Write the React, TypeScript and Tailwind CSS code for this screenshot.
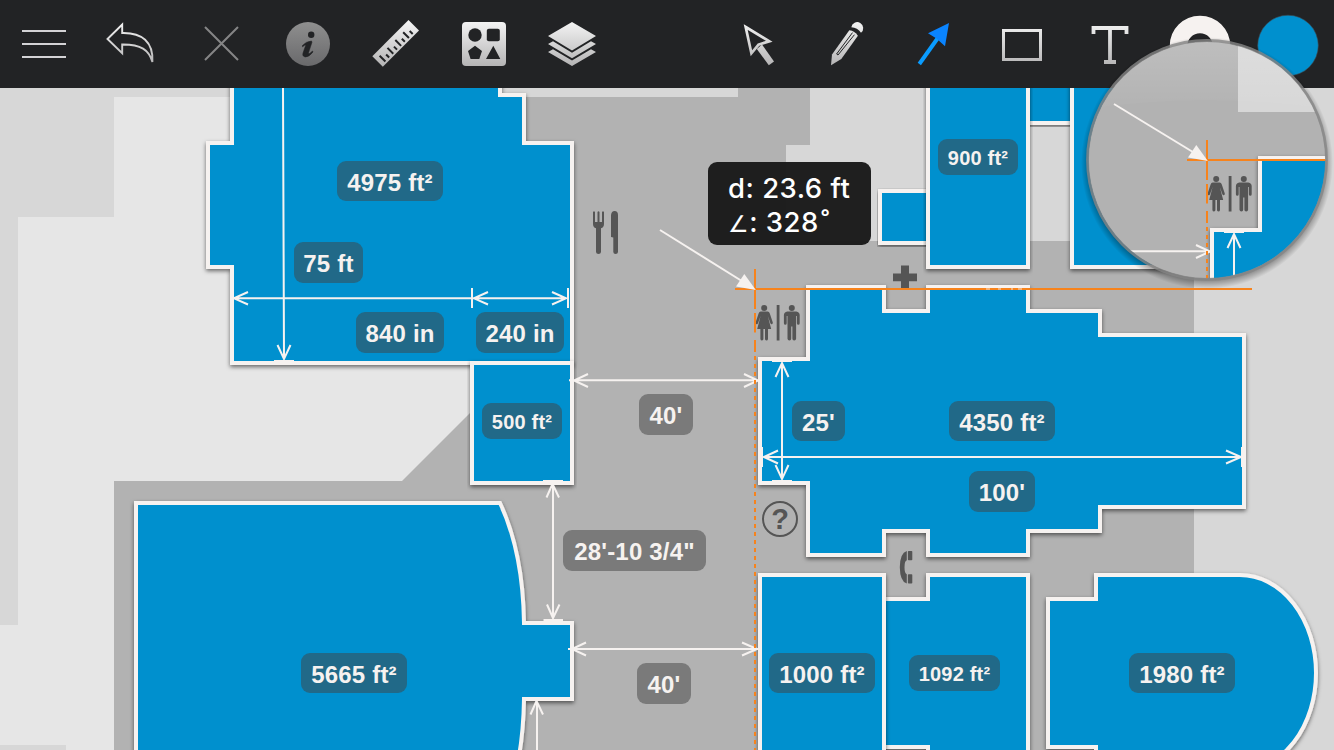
import type { ReactNode } from "react";

type Label = { text: string; x: number; y: number; w: number; h: number; small?: boolean };

const labels: Label[] = [
  { text: "4975 ft²", x: 337, y: 161, w: 106, h: 40 },
  { text: "75 ft", x: 294, y: 242, w: 69, h: 41 },
  { text: "840 in", x: 356, y: 312, w: 88, h: 41 },
  { text: "240 in", x: 476, y: 312, w: 88, h: 41 },
  { text: "500 ft²", x: 482, y: 403, w: 80, h: 36, small: true },
  { text: "40'", x: 639, y: 394, w: 54, h: 41 },
  { text: "28'-10 3/4\"", x: 563, y: 530, w: 143, h: 41 },
  { text: "40'", x: 637, y: 663, w: 54, h: 41 },
  { text: "25'", x: 792, y: 401, w: 53, h: 40 },
  { text: "4350 ft²", x: 949, y: 401, w: 106, h: 40 },
  { text: "100'", x: 969, y: 471, w: 66, h: 41 },
  { text: "900 ft²", x: 938, y: 139, w: 80, h: 36, small: true },
  { text: "5665 ft²", x: 301, y: 653, w: 106, h: 40 },
  { text: "1000 ft²", x: 769, y: 653, w: 106, h: 40 },
  { text: "1092 ft²", x: 909, y: 655, w: 91, h: 36, small: true },
  { text: "1980 ft²", x: 1129, y: 653, w: 106, h: 40 },
];

const rooms = [
  "M232 70V143H208V267H232V363H572V143H524V95H500V70Z",
  "M472 363H572V483H472Z",
  "M136 503H500Q523 552 524 623H572V699H524Q523 770 500 819H136Z",
  "M1028 70H1072V123H1028Z",
  "M880 191H928V243H880Z",
  "M928 70H1028V267H928Z",
  "M1072 70H1200V267H1072Z",
  "M760 359H808V287H884V311H928V287H1028V311H1100V335H1244V507H1100V531H1028V555H928V531H884V555H808V483H760Z",
  "M884 599H928V575H1028V800H928V747H884Z",
  "M760 575H884V800H760Z",
  "M1048 599H1096V575H1240A76 98 0 0 1 1240 771H1096V747H1048Z",
];

function Person({ x, woman }: { x: number; woman?: boolean }) {
  return (
    <g transform={`translate(${x} 305)`} fill="#555">
      <circle cx="0" cy="3" r="3" />
      {woman ? (
        <path d="M-3.5 6.5H3.5Q5 6.7 5.6 8.5L8.6 17.5Q8.7 19 7.6 19.2Q6.6 19.3 6.2 18.2L3.6 11L7 24H3.8V34Q3.6 35.5 2.2 35.5Q.8 35.4 .8 34V24H-.8V34Q-.8 35.4 -2.2 35.5Q-3.6 35.5 -3.8 34V24H-7L-3.6 11L-6.2 18.2Q-6.6 19.3 -7.6 19.2Q-8.7 19 -8.6 17.5L-5.6 8.5Q-5 6.7 -3.5 6.5Z" />
      ) : (
        <path d="M-4.5 6.5H4.5Q7.8 7 7.9 10V18.3Q7.8 19.8 6.5 19.8Q5.2 19.8 5.1 18.3V11H4.3V33.7Q4.2 35.5 2.4 35.5Q.6 35.5 .6 33.7V21.5H-.6V33.7Q-.6 35.5 -2.4 35.5Q-4.2 35.5 -4.3 33.7V11H-5.1V18.3Q-5.2 19.8 -6.5 19.8Q-7.8 19.8 -7.9 18.3V10Q-7.8 7 -4.5 6.5Z" />
      )}
    </g>
  );
}

function FloorPlan({ id, magnified }: { id: string; magnified?: boolean }) {
  return (
    <>
      <defs>
        <filter id={id} x="-5%" y="-5%" width="110%" height="112%">
          <feDropShadow dx="0" dy="2" stdDeviation="2.2" floodColor="#000" floodOpacity="0.55" />
        </filter>
      </defs>
      <rect x="0" y="0" width="1334" height="750" fill="#b2b2b2" />
      <path d="M0 0H738V97H114V217H18V625H0Z" fill="#d7d7d7" />
      <path d="M114 97H472V411L402 481H114V750H66V745H0V625H18V217H114Z" fill="#e6e6e6" />
      <path d="M0 745H66V750H0Z" fill="#d7d7d7" />
      <path d="M810 0H1334V750H1194V241H786V145H810Z" fill="#d7d7d7" />

      {rooms.map((d) => (
        <path key={d} d={d} fill="#0090ce" stroke="#f6f2f0" strokeWidth="4" filter={`url(#${id})`} />
      ))}

      <g fill="#555">
        <path d="M593 212Q594 210.500 595 212V222H597.500V212Q598.500 210.500 599.500 212V222H602V212Q603 210.500 604 212V224Q604 227.500 601 228.200V252Q600.800 254 598.500 254Q596.200 254 596 252V228.200Q593 227.500 593 224Z" />
        <path d="M611 237V215Q611.500 211 614.500 211Q618 211 618 215V252Q617.800 254 615.600 254Q613.400 254 613.300 252V237.500Z" />
        <path d="M901 265.500H909V273.500H917V281.300H909V288H901V281.300H893V273.500H901Z" />
        <rect x="776.700" y="305" width="2.800" height="35.500" />
        <path d="M906.800 551V560.300Q904.500 561 904.500 567.200Q904.500 573.500 906.800 574.200V583.500Q900 581.500 899.800 567.200Q900 553 906.800 551Z" />
        <rect x="907.900" y="551" width="4.400" height="9.200" rx=".8" />
        <rect x="907.900" y="574.300" width="4.400" height="9.200" rx=".8" />
        {!magnified && (
          <text x="780" y="529" textAnchor="middle" className="font-['Liberation_Sans',sans-serif] text-[29px] font-bold">?</text>
        )}
      </g>
      <circle cx="780" cy="519" r="17" fill="none" stroke="#555" strokeWidth="2" />
      <Person x={764.2} woman />
      <Person x={791.8} />

      <g fill="none" stroke="#f6f2f0" strokeWidth="2">
        <path d="M283 88L284 359M277.500 345L284 359L290.500 345M274 361H294" />
        <path d="M234 298.300H566M248 292L234 298.300L248 304.500M472 288V308M488 292L474 298.300L488 304.500M552 292L566 298.300L552 304.500M568 288V308" />
        <path d="M569 380.300H762M588 374L574 380.500L588 387M744 374L758 380.500L744 387" />
        <path d="M568 649H760M586 642.500L572 649L586 655.500M742 642.500L757 649L742 655.500" />
        <path d="M553 484V618M546.500 497.500L552.500 484L559 497.500M543 481H563M547 604.500L553 618L559.500 604.500M543.500 620H563" />
        <path d="M537 702V752M530.500 714.500L536.500 701L543 714.500" />
        <path d="M782 363V479M775.500 377L782 363L788.500 377M772 361H792M775.500 465L782 479L788.500 465M772 481H792" />
        <path d="M764 457H1241M778 450.500L764 457L778 463.500M762 447V467M1226 450.500L1241 457L1226 463.500M1242 447V467" />
      </g>

      <g stroke="#f7831c" strokeWidth="2">
        <path d="M735 289H1252" />
        <path d="M755 269V309M755 313V332.500M755 340V352" />
        <path d="M755 356V752" strokeDasharray="4 4" />
      </g>
      <path d="M986 289H990M998 289H1001M1011 289H1013M1018 289H1022" stroke="#fbe2cc" strokeWidth="1.200" />
      <path d={magnified ? "M662 233L745 283.500" : "M660 230L745 283"} stroke="#f6f2f0" strokeWidth="2" />
      <path d="M755.800 290L744.300 274L736 286.500Z" fill="#f6f2f0" />
    </>
  );
}

function Tool({ x, children }: { x: number; children: ReactNode }) {
  return (
    <button className="h-[88px] w-[88px] shrink-0">
      <svg viewBox={`${x} 0 88 88`} className="block h-[88px] w-[88px]">
        {children}
      </svg>
    </button>
  );
}

function Toolbar() {
  const g = "url(#metal)";
  return (
    <header className="flex h-[88px] shrink-0 justify-between bg-[#222325] pr-[2px]">
      <svg className="absolute h-0 w-0">
        <defs>
          <linearGradient id="metal" gradientUnits="userSpaceOnUse" x1="0" y1="20" x2="0" y2="68">
            <stop offset="0" stopColor="#f6f6f6" />
            <stop offset="1" stopColor="#b2b1b2" />
          </linearGradient>
          <linearGradient id="dim" x1="0" y1="0" x2="0" y2="1">
            <stop offset="0" stopColor="#8f8f8f" />
            <stop offset="1" stopColor="#69696b" />
          </linearGradient>
        </defs>
      </svg>
      <div className="flex">
        <Tool x={0}>
          <path d="M22 30H66V32H22ZM22 43H66V45H22ZM22 56H66V58H22Z" fill="#d4d3d6" />
        </Tool>
        <Tool x={88}>
          <path d="M107.500 39L122.200 24.500V33C142 32.500 153.500 42 152.400 62C149 50 141 44.300 122.200 44.500V53.300Z" fill="none" stroke={g} strokeWidth="1.900" />
        </Tool>
        <Tool x={176}>
          <path d="M205 27L238 60M238 27L205 60" stroke="#858586" strokeWidth="2" />
        </Tool>
        <Tool x={264}>
          <circle cx="308" cy="44" r="22" fill="url(#dim)" />
          <circle cx="311.200" cy="34.700" r="3.200" fill="#222325" />
          <path d="M302 46Q306 41.300 311.300 41Q312.200 41.300 311.900 42.500L308.600 52.500Q308.500 54.500 310 53.300L312.500 51L313 52Q309 57.200 305.300 57Q302 56.300 303 53L305.600 45.500Q305.600 44 302.700 46.800Z" fill="#222325" stroke="#222325" strokeWidth=".5" />
        </Tool>
        <Tool x={352}>
          <path d="M372.300 56.200L408.500 20L419 30.500L382.800 66.700Z" fill={g} />
          <g transform="translate(382.800 66.700) rotate(-45)" stroke="#222325" strokeWidth="2">
            <path d="M5.500 -1.800V-10M11 -2V-6.300M16.600 -1.800V-10M22.100 -2V-6.300M27.700 -1.800V-10M33.200 -2V-6.300M38.800 -1.800V-10M44.300 -2V-6.300" />
          </g>
        </Tool>
        <Tool x={440}>
          <rect x="462" y="22" width="44" height="44" rx="4" fill={g} />
          <circle cx="475" cy="35" r="6.700" fill="#222325" />
          <rect x="486.800" y="28.700" width="13" height="12.600" rx="2" fill="#222325" />
          <path d="M475 45.800L482 51L479.300 59H470.600L468 51ZM493.300 45.800L500.300 59H486Z" fill="#222325" />
        </Tool>
        <Tool x={528}>
          <path d="M548 36L572 22L596 36L572 50.500ZM548 44L553 41.300L572 52.700L591 41.300L596 44L572 58.200ZM548 52L553 49.300L572 60.500L591 49.300L596 52L572 66Z" fill={g} />
        </Tool>
      </div>
      <div className="flex">
        <Tool x={716}>
          <path d="M745.700 27L769.300 41.300L758.500 44.600L751.400 53.300Z" fill="none" stroke={g} strokeWidth="2.700" />
          <path d="M756.800 49L768.800 65.300L774 61.500L762 44.500Z" fill={g} />
        </Tool>
        <Tool x={804}>
          <path d="M851.300 27.200Q857.500 27.500 861 32.800A6 6 0 1 0 851.300 27.200Z" fill={g} />
          <path d="M849.300 30.300Q854.800 31 857.900 35.700L841.300 59L831 65.300L832 54.500Z" fill={g} />
          <path d="M852.300 32.900L836.600 54L838 55L854.200 35" fill="none" stroke="#222325" strokeWidth="1" strokeLinejoin="round" strokeLinecap="round" />
        </Tool>
        <Tool x={892}>
          <path d="M919.300 64L940 35" stroke="#0a9cff" strokeWidth="4" />
          <path d="M949 23L945 46.300L936.500 38.500L928 33.300Z" fill="#0a84ff" />
        </Tool>
        <Tool x={980}>
          <rect x="1003.500" y="30.500" width="37" height="29" fill="none" stroke={g} strokeWidth="3" />
        </Tool>
        <Tool x={1068}>
          <path d="M1092 28H1128M1093.500 26V34M1126.500 26V34M1110 26V64M1104 62H1116" stroke={g} strokeWidth="3.800" fill="none" />
        </Tool>
        <Tool x={1156}>
          <circle cx="1200" cy="46" r="21.500" fill="none" stroke="#f6f2f0" strokeWidth="17.500" />
        </Tool>
        <Tool x={1244}>
          <circle cx="1288" cy="45.500" r="30.300" fill="#0090ce" stroke="#3c4a52" strokeWidth=".6" />
        </Tool>
      </div>
    </header>
  );
}

function Loupe() {
  return (
    <svg viewBox="1070 30 264 270" className="pointer-events-none absolute top-[30px] left-[1070px] h-[270px] w-[264px]">
      <defs>
        <clipPath id="glass">
          <circle cx="1207" cy="160" r="118.500" />
        </clipPath>
        <radialGradient id="halo" gradientUnits="userSpaceOnUse" cx="1207" cy="163" r="126">
          <stop offset="0.920" stopColor="#000" stopOpacity="0.400" />
          <stop offset="1" stopColor="#000" stopOpacity="0" />
        </radialGradient>
        <linearGradient id="gloss" x1="0" y1="0" x2="0" y2="1">
          <stop offset="0" stopColor="#fff" stopOpacity="0.180" />
          <stop offset="1" stopColor="#fff" stopOpacity="0.010" />
        </linearGradient>
      </defs>
      <circle cx="1207" cy="163" r="126" fill="url(#halo)" />
      <g clipPath="url(#glass)">
        <g transform="translate(452 -129)">
          <FloorPlan id="loupe-shadow" magnified />
        </g>
        <path d="M1080 30H1334V110Q1207 90 1080 110Z" fill="url(#gloss)" />
      </g>
      <circle cx="1207" cy="160" r="119.500" fill="none" stroke="#868686" strokeOpacity=".8" strokeWidth="2.800" />
    </svg>
  );
}

export default function App() {
  return (
    <div className="relative flex h-[750px] w-[1334px] flex-col overflow-hidden bg-[#b2b2b2] font-['Liberation_Sans',sans-serif]">
      <Toolbar />
      <main className="relative flex-1 overflow-hidden">
        <svg viewBox="0 88 1334 662" className="block h-[662px] w-[1334px]">
          <FloorPlan id="room-shadow" />
        </svg>
        <div className="absolute -top-[88px] left-0">
          {labels.map((l) => (
            <div
              key={`${l.x}-${l.y}`}
              className={`absolute flex items-center justify-center rounded-[9px] bg-[#424242]/50 font-bold whitespace-nowrap text-[#f6f2f0] ${l.small ? "pt-[1px] text-[20px] leading-none tracking-[0.2px]" : "pt-[3px] text-[24px] leading-none tracking-[0.2px]"}`}
              style={{ left: l.x, top: l.y, width: l.w, height: l.h }}
            >
              {l.text}
            </div>
          ))}
        </div>
        <div className="absolute top-[74px] left-[708px] h-[83px] w-[163px] rounded-[9px] bg-[#191919]/97 pt-[9px] pl-[20px] font-['Inter',sans-serif] text-[27.500px] leading-[34px] font-medium tracking-[0.5px] whitespace-nowrap text-white">
          <p>d: 23.6 ft</p>
          <p>
            <span className="font-['DejaVu_Sans',sans-serif] text-[23px] leading-none">∠</span>: 328<span className="ml-[2px]">˚</span>
          </p>
        </div>
      </main>
      <Loupe />
    </div>
  );
}
